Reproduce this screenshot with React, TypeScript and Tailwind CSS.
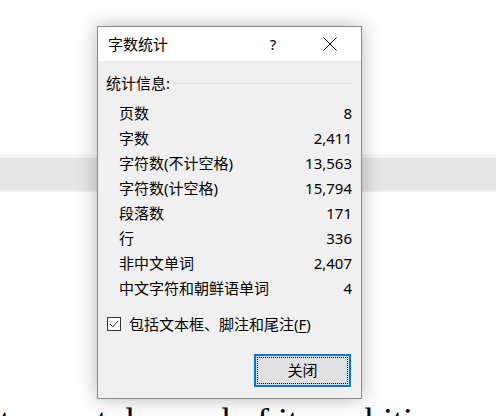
const stats = [
  { label: "页数", value: "8" },
  { label: "字数", value: "2,411" },
  { label: "字符数(不计空格)", value: "13,563" },
  { label: "字符数(计空格)", value: "15,794" },
  { label: "段落数", value: "171" },
  { label: "行", value: "336" },
  { label: "非中文单词", value: "2,407" },
  { label: "中文字符和朝鲜语单词", value: "4" },
];

const uiFont = "font-['Noto_Sans','Noto_Sans_CJK_SC',sans-serif]";

function WordCountDialog() {
  return (
    <div
      className={`absolute left-[97px] top-[26px] flex h-[373px] w-[265px] flex-col border border-[#8a8a8a] bg-[#f0f0f0] text-[15px] leading-none text-black shadow-[0_0_18px_rgba(0,0,0,0.28)] ${uiFont}`}
    >
      <div className="flex h-[34px] items-center bg-white">
        <span className="flex-1 pl-[10px]">字数统计</span>
        <span className="flex w-[46px] justify-center">?</span>
        <span className="ml-[11px] mr-[8px] flex w-[46px] justify-center">
          <svg width="14" height="14" viewBox="0 0 14 14">
            <path d="M0.5 0.5 L13.5 13.5 M13.5 0.5 L0.5 13.5" stroke="#000" strokeWidth="1" />
          </svg>
        </span>
      </div>

      <div className="mt-[12px] flex h-[20px] items-center pl-[8px] pr-[9px]">
        <span>统计信息:</span>
        <div className="ml-[3px] flex-1 border-t border-[#dadada]" />
      </div>

      <div className="mt-[8px]">
        {stats.map((row) => (
          <div
            key={row.label}
            className="flex h-[25px] items-center justify-between pl-[21px] pr-[9px]"
          >
            <span>{row.label}</span>
            <span>{row.value}</span>
          </div>
        ))}
      </div>

      <div className="mt-[13px] flex h-[20px] items-center gap-[8px] pl-[9px]">
        <span className="flex h-[14px] w-[14px] items-center justify-center border border-[#333] bg-white">
          <svg width="12" height="12" viewBox="0 0 12 12">
            <path d="M2 6 L4.8 8.8 L10 3" fill="none" stroke="#333" strokeWidth="1" />
          </svg>
        </span>
        <span>
          包括文本框、脚注和尾注(<span className="underline underline-offset-2">F</span>)
        </span>
      </div>

      <div className="mt-[20px] flex justify-end pr-[10px]">
        <div className="h-[33px] w-[97px] border-2 border-[#0078d7] bg-[#e1e1e1] p-[1px]">
          <div className="flex h-full items-center justify-center border border-dotted border-black">
            关闭
          </div>
        </div>
      </div>
    </div>
  );
}

export default function App() {
  return (
    <div className="relative h-[416px] w-[496px] overflow-hidden bg-white">
      <div className="pt-[154px]">
        <div className="h-[4px] bg-[#f4f4f4]" />
        <div className="h-[32px] bg-[#e5e5e5]" />
        <div className="h-[2px] bg-[#eeeeee]" />
      </div>
      <p className="mt-[211px] whitespace-nowrap font-['Liberation_Serif',serif] text-[36px] leading-none text-black">
        to meet demand of its ambition and agility to
      </p>
      <WordCountDialog />
    </div>
  );
}
